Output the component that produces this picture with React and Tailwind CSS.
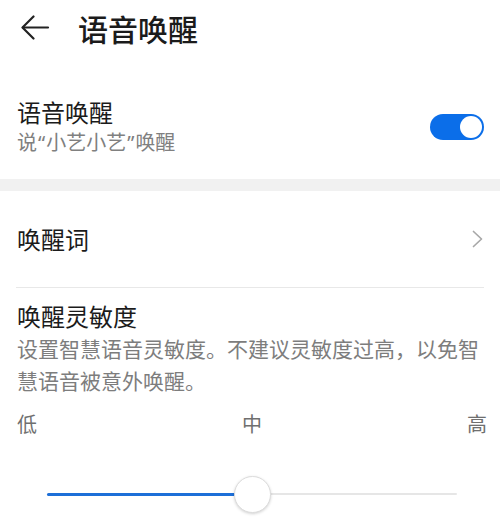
import { useState } from 'react'

export default function App() {
  const [on, setOn] = useState(true)
  const [level] = useState(50)

  return (
    <div className="w-[500px] h-[529px] overflow-hidden bg-white font-['Noto_Sans_CJK_SC','Noto_Sans',sans-serif] text-[#1b1b1b]">
      {/* Header */}
      <div className="h-[56px] flex items-center pl-[21px]">
        <svg width="29" height="26" viewBox="0 0 29 26" fill="none" stroke="#222" strokeWidth="2.2" strokeLinecap="round" strokeLinejoin="round">
          <path d="M27 12.5H2" />
          <path d="M12.5 1.5L1.5 12.5L12.5 23.5" />
        </svg>
        <h1 className="ml-[28px] text-[30px] leading-[38px] font-medium">语音唤醒</h1>
      </div>

      {/* Voice wake toggle */}
      <div className="flex items-center justify-between pt-[40px] pb-[22px] pl-[17px] pr-[16px]">
        <div>
          <p className="text-[24px] leading-[32px]">语音唤醒</p>
          <p className="text-[20px] leading-[28px] text-[#808080]">
            说<span className="font-['Noto_Sans',sans-serif] px-[1px]">“</span>小艺小艺<span className="font-['Noto_Sans',sans-serif] px-[1px]">”</span>唤醒
          </p>
        </div>
        <button
          onClick={() => setOn(!on)}
          className={`w-[54px] h-[26px] rounded-full p-[2px] flex ${on ? 'justify-end bg-[#0b6ee9]' : 'justify-start bg-[#cfcfcf]'}`}
        >
          <span className="w-[22px] h-[22px] rounded-full bg-white" />
        </button>
      </div>

      <div className="h-[12px] bg-[#f1f1f1]" />

      {/* Wake word */}
      <div className="h-[96px] flex items-center justify-between pl-[17px] pr-[17px]">
        <p className="text-[24px] leading-[32px]">唤醒词</p>
        <svg width="11" height="18" viewBox="0 0 11 18" fill="none" stroke="#a8a8a8" strokeWidth="1.7" strokeLinecap="round" strokeLinejoin="round">
          <path d="M1.5 1.5L9.5 9L1.5 16.5" />
        </svg>
      </div>
      <div className="mx-[16px] h-px bg-[#e8e8e8]" />

      {/* Sensitivity */}
      <div className="pt-[12px] pl-[17px] pr-[16px]">
        <p className="text-[24px] leading-[32px]">唤醒灵敏度</p>
        <p className="text-[21px] leading-[32px] text-[#7d7d7d]">
          设置智慧语音灵敏度。不建议灵敏度过高，以免智慧语音被意外唤醒。
        </p>
      </div>

      <div className="mt-[14px] flex justify-between pl-[17px] pr-[13px] text-[20px] leading-[28px] text-[#6f6f6f]">
        <span>低</span>
        <span>中</span>
        <span>高</span>
      </div>

      {/* Slider */}
      <div className="mt-[36px] ml-[47px] mr-[43px] h-[40px] relative flex items-center">
        <div className="w-full h-[2px] bg-[#e6e6e6] rounded-full" />
        <div className="absolute left-0 top-[18.5px] h-[3px] bg-[#1d6fd8] rounded-full" style={{ width: `${level}%` }} />
        <div
          className="absolute top-[1.5px] w-[37px] h-[37px] -ml-[18.5px] rounded-full bg-white border border-[#dcdcdc] shadow-[0_1px_3px_rgba(0,0,0,0.18)]"
          style={{ left: `${level}%` }}
        />
      </div>
    </div>
  )
}
